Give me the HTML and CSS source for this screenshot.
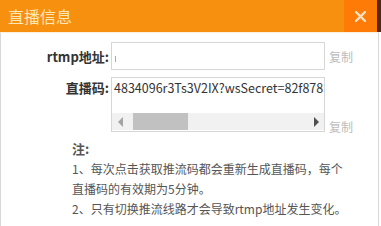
FILE: index.html
```html
<!DOCTYPE html>
<html lang="zh-CN">
<head>
    <meta charset="UTF-8">
    <title>直播信息</title>
    <link rel="stylesheet" href="styles.css">
</head>
<body>
    <div class="dialog">
        <div class="dialog_head">
            <span class="title">直播信息</span>
            <span class="close">
                <svg width="11" height="11" viewBox="0 0 11 11">
                    <path d="M1 1L10 10M10 1L1 10" stroke="#fde3c4" stroke-width="2.4" stroke-linecap="round"/>
                </svg>
            </span>
            <span class="edge"></span>
        </div>
        <div class="dialog_body">
            <div class="row">
                <label class="label">rtmp地址:</label>
                <div class="input"><span class="caret"></span></div>
                <a class="copy">复制</a>
            </div>
            <div class="row row_code">
                <label class="label">直播码:</label>
                <div class="textarea">
                    <div class="code">4834096r3Ts3V2IX?wsSecret=82f878</div>
                    <div class="scrollbar">
                        <span class="arrow arrow_left"></span>
                        <span class="thumb"></span>
                        <span class="arrow arrow_right"></span>
                    </div>
                </div>
                <a class="copy">复制</a>
            </div>
            <div class="note">
                <p class="note_title">注:</p>
                <p>1、每次点击获取推流码都会重新生成直播码，每个直播码的有效期为5分钟。</p>
                <p>2、只有切换推流线路才会导致rtmp地址发生变化。</p>
            </div>
        </div>
    </div>
</body>
</html>
```

FILE: styles.css
```css
*{
    box-sizing: border-box;
}
body{
    margin: 0;
    font-family: "Noto Sans CJK SC", sans-serif;
    background-color: #fff;
}
.dialog{
    width: 381px;
    height: 226px;
    overflow: hidden;
}
.dialog_head{
    height: 32px;
    display: flex;
    background-color: #f8900f;
}
.title{
    flex: 1;
    padding-left: 8px;
    line-height: 32px;
    font-size: 16px;
    color: #fde7b6;
}
.close{
    width: 33px;
    display: flex;
    align-items: center;
    justify-content: center;
    background-color: #ff7b07;
}
.edge{
    width: 4px;
    background-color: #4a2c18;
}
.dialog_body{
    height: 194px;
    padding-top: 9px;
    border-left: 1px solid #d8d8d8;
    border-right: 1px solid #d8d8d8;
    margin-right: 2px;
    border-top: 1px solid #fbf0dc;
}
.row{
    display: flex;
    align-items: center;
    margin-bottom: 7px;
}
.label{
    width: 110px;
    padding-right: 2px;
    text-align: right;
    font-size: 13px;
    font-weight: bold;
    color: #333;
}
.input{
    width: 214px;
    height: 28px;
    border: 1px solid #d6d6d6;
    padding: 13px 0 0 3px;
}
.caret{
    display: block;
    width: 1px;
    height: 6px;
    background-color: #aaa;
}
.copy{
    margin-left: 4px;
    font-size: 12px;
    color: #bcbcbc;
}
.row_code{
    align-items: flex-start;
}
.row_code .label{
    padding-top: 1px;
}
.row_code .copy{
    align-self: flex-end;
    margin-bottom: -3px;
}
.textarea{
    width: 214px;
    height: 55px;
    border: 1px solid #d6d6d6;
    display: flex;
    flex-direction: column;
    justify-content: space-between;
}
.code{
    padding-left: 2px;
    font-size: 12.5px;
    line-height: 20px;
    color: #333;
    white-space: nowrap;
    overflow: hidden;
}
.scrollbar{
    height: 17px;
    margin: 0 0 1px 0;
    display: flex;
    align-items: center;
    background-color: #f1f1f1;
}
.arrow{
    width: 0;
    height: 0;
    border-top: 5px solid transparent;
    border-bottom: 5px solid transparent;
}
.arrow_left{
    margin-left: 6px;
    border-right: 5px solid #a3a3a3;
}
.arrow_right{
    margin-left: auto;
    margin-right: 5px;
    border-left: 5px solid #505050;
}
.thumb{
    width: 55px;
    height: 17px;
    margin-left: 10px;
    background-color: #c1c1c1;
}
.note{
    padding: 0 0 0 71px;
    font-size: 12px;
    line-height: 20px;
    color: #555;
    width: 352px;
}
.note p{
    margin: 0;
}
.note_title{
    font-weight: bold;
    font-size: 13px;
}
```
